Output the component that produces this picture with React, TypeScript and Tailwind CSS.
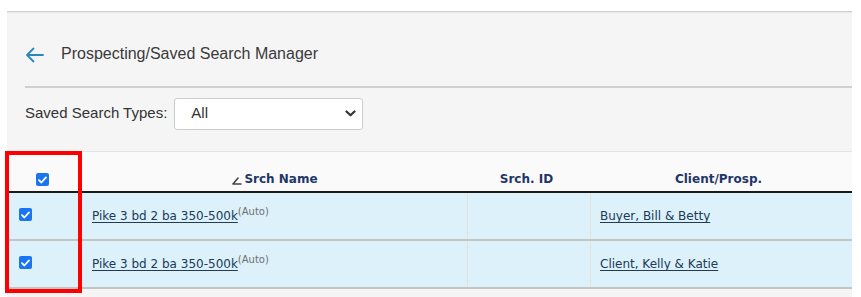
import React from "react";

const rows = [
  { name: "Pike 3 bd 2 ba 350-500k", id: "", client: "Buyer, Bill & Betty" },
  { name: "Pike 3 bd 2 ba 350-500k", id: "", client: "Client, Kelly & Katie" },
];

const Check = () => (
  <span className="inline-flex w-[13px] h-[13px] items-center justify-center rounded-[2px] bg-[#1a75f0]">
    <svg width="9" height="8" viewBox="0 0 9 8" fill="none">
      <path d="M1 4.2 L3.4 6.5 L8 1.4" stroke="white" strokeWidth="1.8" strokeLinecap="round" strokeLinejoin="round" />
    </svg>
  </span>
);

const App = () => {
  return (
    <div className="w-[861px] h-[297px] bg-white overflow-hidden">
      <div className="relative ml-[7px] mt-[11px] w-[845px] h-[286px] bg-[#f5f5f5] border-t border-[#cfcfcf] shadow-[inset_0_1px_1px_rgba(0,0,0,0.06)]">
        {/* Title */}
        <div className="flex items-center h-[74px] pl-[18px] pt-[10px]" style={{ fontFamily: '"Liberation Sans", Arial, sans-serif' }}>
          <svg width="19" height="16" viewBox="0 0 19 16" fill="none" className="mt-[2px]">
            <path d="M18 8 H2 M8.5 1.5 L2 8 L8.5 14.5" stroke="#2b88bd" strokeWidth="1.8" strokeLinecap="round" strokeLinejoin="round" />
          </svg>
          <span className="ml-[17px] text-[16px] text-[#3a3a3a]">Prospecting/Saved Search Manager</span>
        </div>
        <div className="ml-[18px] h-[2px] bg-[#d0d0d0]" />

        {/* Filter */}
        <div className="flex items-center pl-[18px] pt-[9px] h-[42px]" style={{ fontFamily: '"Liberation Sans", Arial, sans-serif' }}>
          <span className="text-[15px] text-[#333]">Saved Search Types:</span>
          <div className="ml-[7px] flex items-center w-[189px] h-[32px] bg-white border border-[#ccc] rounded-[3px] pl-[16px] pr-[6px]">
            <span className="flex-1 text-[15px] text-[#333]">All</span>
            <svg width="11" height="7" viewBox="0 0 11 7" fill="none">
              <path d="M1.5 1.5 L5.5 5.3 L9.5 1.5" stroke="#333" strokeWidth="2.2" strokeLinecap="round" strokeLinejoin="round" />
            </svg>
          </div>
        </div>

        {/* Table */}
        <div className="mt-[21px] border-t border-[#e4e4e4]" style={{ fontFamily: '"DejaVu Sans", Verdana, sans-serif' }}>
          <div className="grid grid-cols-[75px_386px_123px_1fr] h-[41px] bg-[#fafafa] border-b-2 border-[#1a1a1a] text-[12px] font-bold text-[#1f3668]">
            <div className="flex items-end justify-center pb-[5px] pr-[5px]">
              <Check />
            </div>
            <div className="flex items-end justify-center pb-[3px]">
              <svg width="10" height="8" viewBox="0 0 10 8" fill="none" className="mb-[3px] mr-[2px]">
                <path d="M1 7 L6 1 M1 7 H9" stroke="#444" strokeWidth="1.6" strokeLinecap="round" />
              </svg>
              <span>Srch Name</span>
            </div>
            <div className="flex items-end justify-center pb-[3px] pr-[6px]">Srch. ID</div>
            <div className="flex items-end justify-center pb-[3px] pr-[6px]">Client/Prosp.</div>
          </div>
          {rows.map((r, i) => (
            <div key={i} className="grid grid-cols-[75px_386px_123px_1fr] h-[48px] bg-[#dcf1fa] border-b-2 border-[#c4c4c4] text-[12px]">
              <div className="flex items-center pl-[12px] pb-[3px] border-r border-[#e2e2e2]">
                <Check />
              </div>
              <div className="flex items-center pl-[10px] border-r border-[#e2e2e2]">
                <span className="underline underline-offset-[2px] text-[#203a58]">{r.name}</span>
                <span className="text-[10px] text-[#707070] -mt-[10px]">(Auto)</span>
              </div>
              <div className="border-r border-[#e2e2e2]">{r.id}</div>
              <div className="flex items-center pl-[9px]">
                <span className="underline underline-offset-[2px] text-[#203a58]">{r.client}</span>
              </div>
            </div>
          ))}
        </div>

        {/* annotation box */}
        <div className="absolute left-[-2px] top-[139px] w-[77px] h-[142px] border-[4px] border-[#ff0000]" />
      </div>
    </div>
  );
};

export default App;
